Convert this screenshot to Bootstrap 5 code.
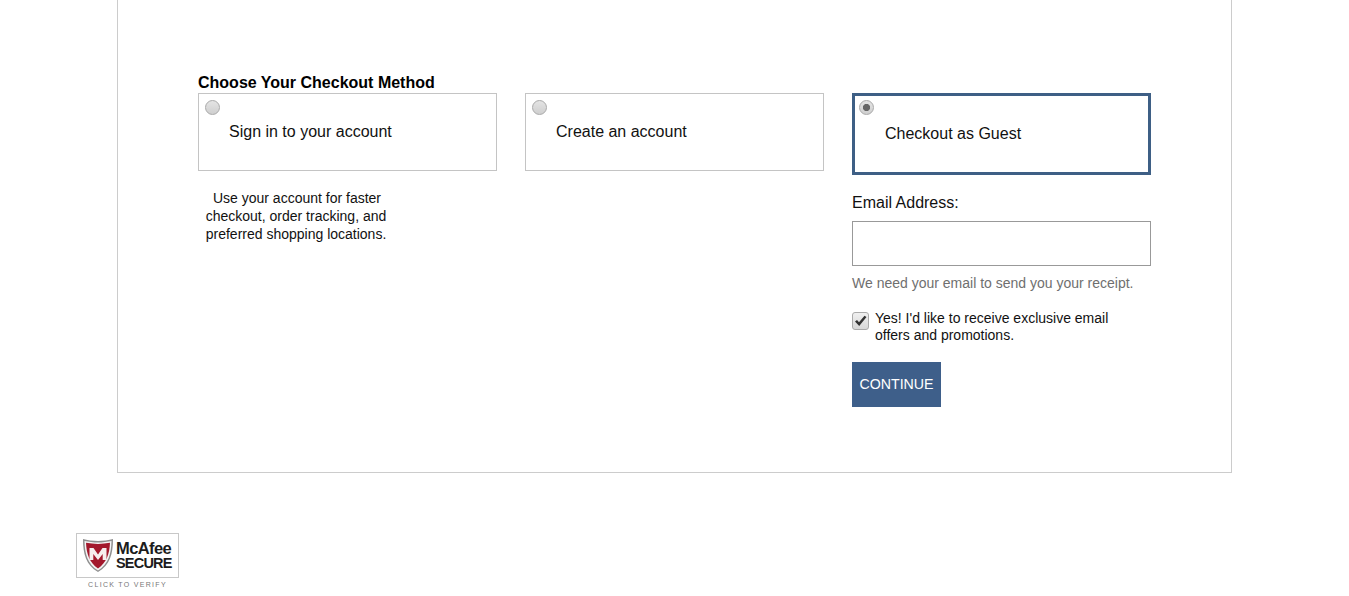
<!DOCTYPE html>
<html lang="en">
<head>
<meta charset="utf-8">
<title>Checkout</title>
<link rel="stylesheet" href="https://cdn.jsdelivr.net/npm/bootstrap@5.3.0/dist/css/bootstrap.min.css">
<style>
html,body{height:596px;overflow:hidden}
body{font-family:"Liberation Sans",Arial,sans-serif;color:#111;background:#fff}
.checkout-panel{margin-left:117px;width:1115px;height:473px;border:1px solid #ccc;border-top:0;padding:73px 0 0 80px}
.method-title{font-size:16px;font-weight:700;line-height:20px;margin:0;color:#000}
.method-row{gap:28px}
.method-col{width:299px}
.method-box{height:78px;border:1px solid #c4c4c4;padding:6px;margin:0;display:block}
.method-box.picked{height:82px;border:3px solid #3e5f85;padding:4px}
.method-text{display:block;font-size:16px;line-height:20px;padding:7px 0 0 24px}
.picked .method-text{padding:9px 0 0 26px}
.round-pick{appearance:none;display:block;width:15px;height:15px;margin:0;border-radius:50%;border:1px solid #a9a9a9;background:linear-gradient(#e4e4e4,#cfcfcf)}
.round-pick:checked{background:radial-gradient(circle,#666 0,#666 3.2px,transparent 4px),linear-gradient(#e4e4e4,#cfcfcf)}
.method-note{width:196px;margin:18px 0 0;font-size:14px;line-height:18px;text-align:center;color:#111;text-indent:2px}
.email-label{display:block;font-size:16px;line-height:20px;margin:18px 0 8px}
.email-field{display:block;width:299px;height:45px;border:1px solid #999;border-radius:0;background:#fff;padding:4px 8px}
.email-help{font-size:14px;line-height:18px;color:#6f6f6f;margin:8px 0 18px}
.offer-row{gap:6px;font-size:14px;line-height:17px;margin-bottom:18px}
.tick-box{appearance:none;display:block;width:17px;height:18px;margin:2px 0 0 0;border:1px solid #aaa;border-radius:3px;background:linear-gradient(#f0f0f0,#d8d8d8)}
.tick-wrap{position:relative;flex:none;width:17px;height:21px}
.tick-wrap svg{position:absolute;left:2px;top:5px;pointer-events:none}
.go-btn{display:block;width:89px;height:45px;padding:0;border:0;border-radius:0;background:#3e5f8a;color:#fff;font-size:14.2px}
.go-btn:hover{background:#3e5f8a;color:#fff}
.seal-wrap{margin:60px 0 0 76px;width:103px}
.seal-frame{height:45px;border:1px solid #c8c8c8;gap:2px;padding-left:5px;background:#fff}
.seal-words{line-height:1;color:#1c1c1c;font-weight:700;letter-spacing:-.6px}
.seal-name{display:block;font-size:16.5px;line-height:16px}
.seal-secure{display:block;font-size:14.5px;line-height:15px;letter-spacing:-.8px}
.seal-cta{font-size:7px;line-height:10px;letter-spacing:1.3px;text-align:center;color:#777;margin-top:2px}
</style>
</head>
<body>
<main class="checkout-panel">
  <h2 class="method-title">Choose Your Checkout Method</h2>
  <div class="d-flex method-row">
    <section class="method-col">
      <label class="method-box">
        <input class="round-pick" type="radio" name="method">
        <span class="method-text">Sign in to your account</span>
      </label>
      <p class="method-note">Use your account for faster checkout, order tracking, and preferred shopping locations.</p>
    </section>
    <section class="method-col">
      <label class="method-box">
        <input class="round-pick" type="radio" name="method">
        <span class="method-text">Create an account</span>
      </label>
    </section>
    <section class="method-col">
      <label class="method-box picked">
        <input class="round-pick" type="radio" name="method" checked>
        <span class="method-text">Checkout as Guest</span>
      </label>
      <label class="email-label" for="email">Email Address:</label>
      <input class="email-field" id="email" type="email">
      <p class="email-help">We need your email to send you your receipt.</p>
      <label class="d-flex offer-row">
        <span class="tick-wrap">
          <input class="tick-box" type="checkbox" checked>
          <svg width="13" height="12" viewBox="0 0 13 12"><path d="M1 6.5 3 5l2 2.2L10.500 .8 12.500 2 5.200 11z" fill="#333"/></svg>
        </span>
        <span>Yes! I'd like to receive exclusive email<br>offers and promotions.</span>
      </label>
      <button class="btn go-btn" type="button">CONTINUE</button>
    </section>
  </div>
</main>
<div class="seal-wrap">
  <div class="d-flex align-items-center seal-frame">
    <svg width="32" height="35" viewBox="0 0 32 35">
      <path d="M16 3C11 3 5 2 1 1c0 15 3 26 15 33C28 27 31 16 31 1c-4 1-10 2-15 2z" fill="#8f8f8f"/>
      <path d="M16 4.500C11.500 4.500 6.500 3.800 2.500 3c.3 13 3 23 13.500 29.500C26.500 26 29.200 16 29.500 3c-4 .8-9 1.500-13.500 1.500z" fill="#f4f4f4"/>
      <path d="M16 6C12 6 8 5.500 4 4.800c.5 11.200 3.500 20 12 25.700 8.500-5.700 11.500-14.500 12-25.700C24 5.500 20 6 16 6z" fill="#a3182c"/>
      <path d="M7.500 22V10h4l4.500 6.500 4.500-6.500h4v12h-3.800v-6L16 22l-4.700-6v6z" fill="#f6eeee"/>
    </svg>
    <span class="seal-words"><span class="seal-name">McAfee</span><span class="seal-secure">SECURE</span></span>
  </div>
  <div class="seal-cta">CLICK TO VERIFY</div>
</div>
<script src="https://cdn.jsdelivr.net/npm/bootstrap@5.3.0/dist/js/bootstrap.bundle.min.js"></script>
</body>
</html>
